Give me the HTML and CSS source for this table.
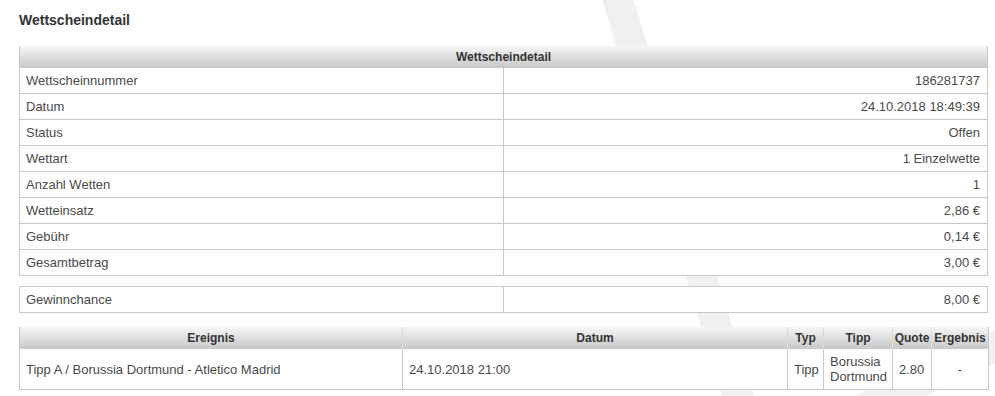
FILE: index.html
```html
<!DOCTYPE html>
<html lang="de">
<head>
<meta charset="utf-8">
<title>Wettscheindetail</title>
<link rel="stylesheet" href="styles.css">
</head>
<body>
<svg class="watermark" width="995" height="396" viewBox="0 0 995 396" aria-hidden="true">
  <path d="M615 -10 L745 420" />
  <path d="M1010 340 L860 410" />
</svg>
<div class="page">
  <h1 class="title">Wettscheindetail</h1>
  <table class="detail">
    <colgroup><col class="c-half"><col class="c-half"></colgroup>
    <thead>
      <tr><th colspan="2">Wettscheindetail</th></tr>
    </thead>
    <tbody>
      <tr><td>Wettscheinnummer</td><td class="val">186281737</td></tr>
      <tr><td>Datum</td><td class="val">24.10.2018 18:49:39</td></tr>
      <tr><td>Status</td><td class="val">Offen</td></tr>
      <tr><td>Wettart</td><td class="val">1 Einzelwette</td></tr>
      <tr><td>Anzahl Wetten</td><td class="val">1</td></tr>
      <tr><td>Wetteinsatz</td><td class="val">2,86 €</td></tr>
      <tr><td>Gebühr</td><td class="val">0,14 €</td></tr>
      <tr><td>Gesamtbetrag</td><td class="val">3,00 €</td></tr>
    </tbody>
  </table>
  <table class="detail chance">
    <colgroup><col class="c-half"><col class="c-half"></colgroup>
    <tbody>
      <tr><td>Gewinnchance</td><td class="val">8,00 €</td></tr>
    </tbody>
  </table>
  <table class="events">
    <colgroup>
      <col class="c-event"><col class="c-date"><col class="c-type"><col class="c-tip"><col class="c-quote"><col class="c-result">
    </colgroup>
    <thead>
      <tr><th>Ereignis</th><th>Datum</th><th>Typ</th><th>Tipp</th><th>Quote</th><th>Ergebnis</th></tr>
    </thead>
    <tbody>
      <tr>
        <td>Tipp A / Borussia Dortmund - Atletico Madrid</td>
        <td>24.10.2018 21:00</td>
        <td>Tipp</td>
        <td>Borussia Dortmund</td>
        <td>2.80</td>
        <td class="center">-</td>
      </tr>
    </tbody>
  </table>
</div>
</body>
</html>
```
FILE: styles.css
```css
html, body {
  margin: 0;
  padding: 0;
  background: #ffffff;
}

body {
  font-family: "Liberation Sans", Arial, sans-serif;
  color: #4a4a4a;
  position: relative;
  overflow: hidden;
  height: 396px;
}

.watermark {
  position: absolute;
  left: 0;
  top: 0;
  z-index: 0;
}

.watermark path {
  fill: none;
  stroke: #f0f0f0;
  stroke-width: 30;
}

.page {
  position: relative;
  z-index: 1;
  padding: 12px 0 0 19px;
  width: 969px;
}

.title {
  margin: 0 0 18px;
  font-size: 14px;
  line-height: 16px;
  font-weight: bold;
  color: #333333;
}

table {
  border-collapse: collapse;
  width: 969px;
  table-layout: fixed;
  background: #ffffff;
  font-size: 13px;
}

th {
  height: 21px;
  padding: 0;
  font-size: 12px;
  font-weight: bold;
  color: #333333;
  text-align: center;
  vertical-align: middle;
  background: linear-gradient(to bottom, #f6f6f6 0%, #e2e2e2 45%, #c9c9c9 100%);
  border-left: 1px solid #c8c8c8;
  border-right: 1px solid #c8c8c8;
}

td {
  height: 25px;
  padding: 0 6px;
  border: 1px solid #c8c8c8;
  vertical-align: middle;
  line-height: 15px;
}

.c-half { width: 50%; }

.val {
  text-align: right;
  padding-right: 7px;
}

.chance {
  margin-top: 10px;
}

.events {
  margin-top: 14px;
}

.events th {
  border-left: 1px solid #dcdcdc;
  border-right: 1px solid #dcdcdc;
}

.events th:first-child { border-left-color: #c8c8c8; }
.events th:last-child { border-right-color: #c8c8c8; }

.events td {
  height: 40px;
}

.c-event { width: 383px; }
.c-date { width: 385px; }
.c-type { width: 36px; }
.c-tip { width: 69px; }
.c-quote { width: 39px; }
.c-result { width: 57px; }

.center {
  text-align: center;
}
```
